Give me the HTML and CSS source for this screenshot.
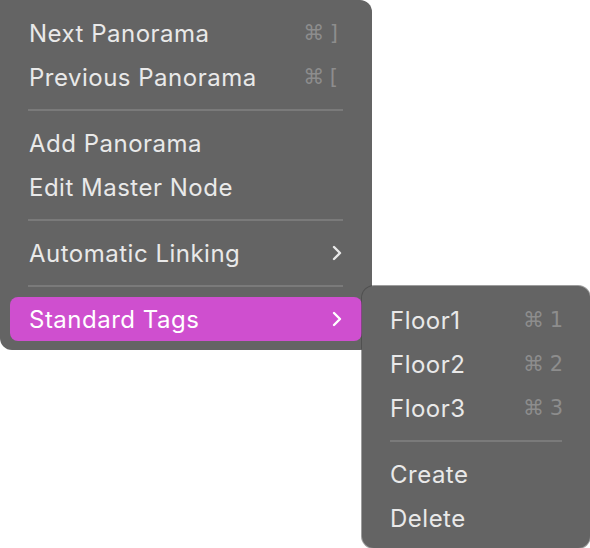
FILE: index.html
```html
<html lang="en">
<head>
    <meta charset="UTF-8">
    <meta name="viewport" content="width=device-width, initial-scale=1.0">
    <title>Panorama Menu</title>

    <link rel="stylesheet" href="styles.css">

</head>
<body>

<div id="stage">
  <div class="menu" id="mainmenu">
    <div class="item"><span class="label">Next Panorama</span><span class="key">⌘ ]</span></div>
    <div class="item"><span class="label">Previous Panorama</span><span class="key">⌘ [</span></div>
    <div class="sep"></div>
    <div class="item"><span class="label">Add Panorama</span></div>
    <div class="item"><span class="label">Edit Master Node</span></div>
    <div class="sep"></div>
    <div class="item"><span class="label">Automatic Linking</span>
      <svg class="chev" width="12" height="16" viewBox="0 0 12 16"><polyline points="3,2 9,8 3,14" fill="none" stroke="currentColor" stroke-width="2.4" stroke-linecap="round" stroke-linejoin="round"/></svg>
    </div>
    <div class="sep"></div>
    <div class="item active"><span class="label">Standard Tags</span>
      <svg class="chev" width="12" height="16" viewBox="0 0 12 16"><polyline points="3,2 9,8 3,14" fill="none" stroke="currentColor" stroke-width="2.4" stroke-linecap="round" stroke-linejoin="round"/></svg>
    </div>
  </div>

  <!-- submenu for Standard Tags -->
  <div class="menu" id="submenu">
    <div class="item"><span class="label">Floor1</span><span class="key">⌘ 1</span></div>
    <div class="item"><span class="label">Floor2</span><span class="key">⌘ 2</span></div>
    <div class="item"><span class="label">Floor3</span><span class="key">⌘ 3</span></div>
    <div class="sep"></div>
    <div class="item"><span class="label">Create</span></div>
    <div class="item"><span class="label">Delete</span></div>
  </div>
</div>

</body>
</html>
```

FILE: styles.css
```css
body{
  margin:0;
  background-color:#ffffff;
  font-family:Inter, "Noto Sans", sans-serif;
}
#stage{
  position:relative;
  width:590px;
  height:548px;
  overflow:hidden;
}
.menu{
  background-color:#646464;
  color:#e9e9e9;
  box-sizing:border-box;
}
#mainmenu{
  width:372px;
  height:350px;
  padding:11px 10px 0 10px;
  border-radius:0 12px 12px 12px;
}
#submenu{
  position:absolute;
  left:362px;
  top:286px;
  width:228px;
  height:262px;
  padding:12px 10px 0 10px;
  border-radius:12px;
  box-shadow:0 0 0 1px rgba(60,60,60,0.5);
}
.item{
  height:44px;
  display:flex;
  align-items:center;
  justify-content:space-between;
  padding:0 19px;
  border-radius:8px;
  font-size:24px;
  letter-spacing:0.5px;
}
#mainmenu .item{
  padding-right:24px;
}
#submenu .item{
  padding:0 17px 0 18px;
}
.item.active{
  background-color:#cf4fcf;
  color:#ffffff;
}
.key{
  color:#8d8d8d;
  font-family:"DejaVu Sans", sans-serif;
  font-size:21px;
  letter-spacing:0;
  word-spacing:-1px;
}
.chev{
  margin-right:-5px;
  color:#e9e9e9;
}
.active .chev{
  color:#ffffff;
}
.sep{
  height:2px;
  margin:10px 19px 10px 18px;
  background-color:#7a7a7a;
}
#submenu .sep{
  margin:10px 18px 10px 18px;
}
```
